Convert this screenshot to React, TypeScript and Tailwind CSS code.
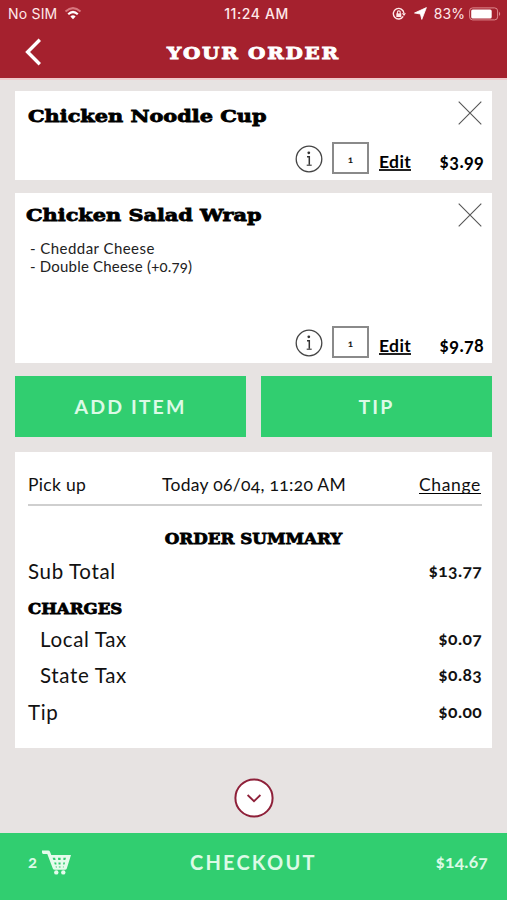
import type { ReactNode } from "react";

const slab = "font-['DejaVu_Serif',serif] font-bold whitespace-nowrap";

function Close() {
  return (
    <svg className="block" width="24" height="24" viewBox="0 0 24 24" fill="none" stroke="#555" strokeWidth="1.1">
      <path d="M.7.7 23.3 23.3M23.3.7.7 23.3" />
    </svg>
  );
}

function InfoIcon() {
  return (
    <svg className="block" width="28" height="28" viewBox="0 0 28 28" fill="none" stroke="#444" strokeWidth="1.3">
      <circle cx="14" cy="14" r="12.8" />
      <circle cx="13.8" cy="7.8" r="1.4" fill="#333" stroke="none" />
      <path d="M12 11.8h2.3v8" stroke="#333" strokeWidth="1.5" />
      <path d="M11.7 20.2h5" stroke="#333" strokeWidth="1.1" />
    </svg>
  );
}

function ItemTitle({ children }: { children: ReactNode }) {
  return (
    <h2
      className={`${slab} origin-left scale-x-[1.19] text-[17.5px] leading-[22px] text-black [-webkit-text-stroke:0.8px_black]`}
    >
      {children}
    </h2>
  );
}

function ItemControls({ price }: { price: string }) {
  return (
    <div className="flex h-[33px] items-start pr-[8px] pl-[280px]">
      <div className="mt-[3px]">
        <InfoIcon />
      </div>
      <div className="ml-[9px] flex h-[32px] w-[37px] items-center justify-center border-2 border-[#8a8a8a] pt-[3px] text-[10px] font-bold">
        1
      </div>
      <span className="mt-[9px] ml-[10px] h-[20px] border-b-2 border-[#222] text-[17.5px] leading-[22px] font-bold tracking-[0.35px] text-black">
        Edit
      </span>
      <span className="mt-[8px] ml-auto text-[18px] leading-[22px] font-bold tracking-[0.3px] text-black">{price}</span>
    </div>
  );
}

function Row({ label, value, className }: { label: string; value: string; className: string }) {
  return (
    <div className={`flex h-6 items-center justify-between leading-6 ${className}`}>
      <span className="-mt-[1px] text-[20.5px] tracking-[0.65px]">{label}</span>
      <span className="text-[17.5px] font-bold tracking-[0.35px]">{value}</span>
    </div>
  );
}

function StatusBar() {
  return (
    <div className="flex h-[27px] items-center justify-between pr-[6px] pl-[8px] font-[Inter,sans-serif] text-[14px] text-[#ffe9ea]">
      <div className="flex w-[160px] items-center gap-[7px]">
        <span className="tracking-[0.2px]">No SIM</span>
        <svg width="18" height="13" viewBox="0 0 18 13" fill="none">
          <path d="M1.5 4.5Q9-2.3 16.5 4.5" stroke="#d8767e" strokeWidth="2" />
          <path d="M4.2 7.2Q9 2.8 13.8 7.2" stroke="#fff" strokeWidth="2.2" />
          <path d="M6.4 9.4Q9 7.2 11.6 9.4L9 12.3Z" fill="#fff" />
        </svg>
      </div>
      <span className="pl-[4px] font-medium tracking-[0.6px]">11:24 AM</span>
      <div className="flex w-[160px] items-center justify-end">
        <svg width="14" height="14" viewBox="0 0 14 14" fill="none" stroke="#ffe9ea">
          <path d="M11.2 9.4A5.3 5.3 0 1 1 11.9 6" strokeWidth="1.4" />
          <path d="M9.8 6.2H14L12 8.9Z" fill="#ffe9ea" stroke="none" />
          <path d="M4.3 6.4h5v3.6h-5Z" fill="#ffe9ea" stroke="none" />
          <path d="M5.4 7V5.2q0-1.3 1.4-1.3t1.4 1.3V7" strokeWidth="1.1" />
        </svg>
        <svg className="ml-[8px]" width="13" height="13" viewBox="0 0 13 13">
          <path d="M12.4.6 7.8 12.4 6.4 7 .5 6Z" fill="#fff" stroke="#fff" strokeWidth=".8" strokeLinejoin="round" />
        </svg>
        <span className="ml-[7px] tracking-[0.1px]">83%</span>
        <svg className="ml-[4px]" width="32" height="14" viewBox="0 0 32 14">
          <rect x=".6" y=".9" width="28" height="12" rx="3" fill="none" stroke="#df8a90" strokeWidth="1" />
          <rect x="2.2" y="2.4" width="20.5" height="9" rx="1.5" fill="#fff" />
          <path d="M30 4.8q2.4 2.1 0 4.2Z" fill="#df8a90" />
        </svg>
      </div>
    </div>
  );
}

export default function App() {
  return (
    <div className="flex h-[900px] w-[507px] flex-col overflow-hidden bg-[#e7e3e2] font-[Lato,sans-serif] text-[#111] oldstyle-nums">
      <header className="h-[80px] shrink-0 border-b-2 border-[#efc9cb] bg-[#a5212e]">
        <StatusBar />
        <div className="flex h-[50px] items-center">
          <svg className="ml-[24px] block" width="20" height="28" viewBox="0 0 20 28" fill="none">
            <path d="M15.8 1.8 3.6 14 15.8 26.2" stroke="#fff" strokeWidth="3.4" />
          </svg>
          <h1
            className={`${slab} mt-[2px] ml-[123px] origin-left scale-x-[1.14] text-[17.5px] tracking-[1.5px] text-white [-webkit-text-stroke:0.9px_white]`}
          >
            YOUR ORDER
          </h1>
        </div>
      </header>

      <main className="flex flex-1 flex-col px-[15px] pt-[11px]">
        <section className="h-[89px] bg-white">
          <div className="flex h-[51px] items-start justify-between pr-[10px] pl-[13px]">
            <div className="pt-[14px]">
              <ItemTitle>Chicken Noodle Cup</ItemTitle>
            </div>
            <div className="mt-[10px]">
              <Close />
            </div>
          </div>
          <ItemControls price="$3.99" />
        </section>

        <section className="mt-[13px] h-[170px] bg-white">
          <div className="flex h-[46px] items-start justify-between pr-[10px] pl-[11px]">
            <div className="pt-[11px]">
              <ItemTitle>Chicken Salad Wrap</ItemTitle>
            </div>
            <div className="mt-[10px]">
              <Close />
            </div>
          </div>
          <div className="h-[87px] pl-[15px] text-[15px] leading-[18px] text-[#222]">
            <p className="tracking-[0.45px]">- Cheddar Cheese</p>
            <p className="tracking-[0.2px]">- Double Cheese (+0.79)</p>
          </div>
          <ItemControls price="$9.78" />
        </section>

        <div className="mt-[13px] grid h-[61px] grid-cols-2 gap-[15px] text-[19.5px] font-bold tracking-[2.1px] text-[#dcfae6]">
          <button className="bg-[#31ce70]">ADD ITEM</button>
          <button className="bg-[#31ce70]">TIP</button>
        </div>

        <section className="mt-[15px] h-[296px] bg-white pt-[20px] pr-[10px] pl-[13px]">
          <div className="flex h-[34px] justify-between border-b-[2px] border-[#cfcfcf] text-[17.5px] leading-[26px] tracking-[0.3px]">
            <span>Pick up</span>
            <span className="pl-[3px]">Today 06/04, 11:20 AM</span>
            <span className="mr-[1px] h-[22px] border-b border-black tracking-[0.65px]">Change</span>
          </div>
          <h3
            className={`${slab} mt-[22px] mr-[3px] scale-x-[1.08] text-center text-[15.5px] leading-[22px] text-black [-webkit-text-stroke:0.8px_black]`}
          >
            ORDER SUMMARY
          </h3>
          <Row className="mt-[9px]" label="Sub Total" value="$13.77" />
          <h3
            className={`${slab} mt-[15px] origin-left scale-x-[1.07] text-[15.5px] leading-[22px] text-black [-webkit-text-stroke:0.8px_black]`}
          >
            CHARGES
          </h3>
          <Row className="mt-[7px] pl-[12px]" label="Local Tax" value="$0.07" />
          <Row className="mt-[12px] pl-[12px]" label="State Tax" value="$0.83" />
          <Row className="mt-[13px]" label="Tip" value="$0.00" />
        </section>

        <button className="mt-[30px] self-center">
          <svg className="block" width="40" height="40" viewBox="0 0 40 40" fill="none" stroke="#8e2039">
            <circle cx="20" cy="20" r="18.6" fill="#fff" strokeWidth="2" />
            <path d="M13.6 17 20 23.2 26.4 17" strokeWidth="1.8" />
          </svg>
        </button>
      </main>

      <footer className="flex h-[67px] shrink-0 items-center bg-[#31ce70] pr-[19px] pb-[9px] pl-[28px] font-bold text-[#dcfae6]">
        <span className="w-[9px] text-[17px]">2</span>
        <svg className="ml-[5px] block" width="29" height="25" viewBox="0 0 29 25" fill="#e5fbec">
          <path d="M0 .5h6.2q1.3 0 1.9 1.4L9.3 5H29l-4.2 13.4q-.4 1.4-1.9 1.4H12.6q-1.3 0-1.8-1.3L5.3 4H1.2Q0 4 0 2.6Z" />
          <g fill="#31ce70">
            <path d="M10.6 7.8h2.5l.5 2.3h-2.2ZM16 7.8h2.6v2.3h-2.4ZM21.4 7.8h2.6l-.7 2.3h-1.9Z" />
            <path d="M12.2 12.5h2l.3 2h-1.7ZM16.4 12.5h2.2v2h-2ZM21.2 12.5h1.9l-.6 2h-1.3Z" />
            <path d="M13.5 16.5h1.4v1.1h-1ZM16.8 16.5h1.8v1.1h-1.7ZM20.9 16.5h1l-.3 1.1h-.7Z" />
          </g>
          <circle cx="14.3" cy="22.4" r="2.2" />
          <circle cx="21.3" cy="22.4" r="2.2" />
        </svg>
        <span className="ml-[119px] text-[20px] tracking-[2.2px]">CHECKOUT</span>
        <span className="ml-auto text-[17.5px] tracking-[0.2px]">$14.67</span>
      </footer>
    </div>
  );
}
